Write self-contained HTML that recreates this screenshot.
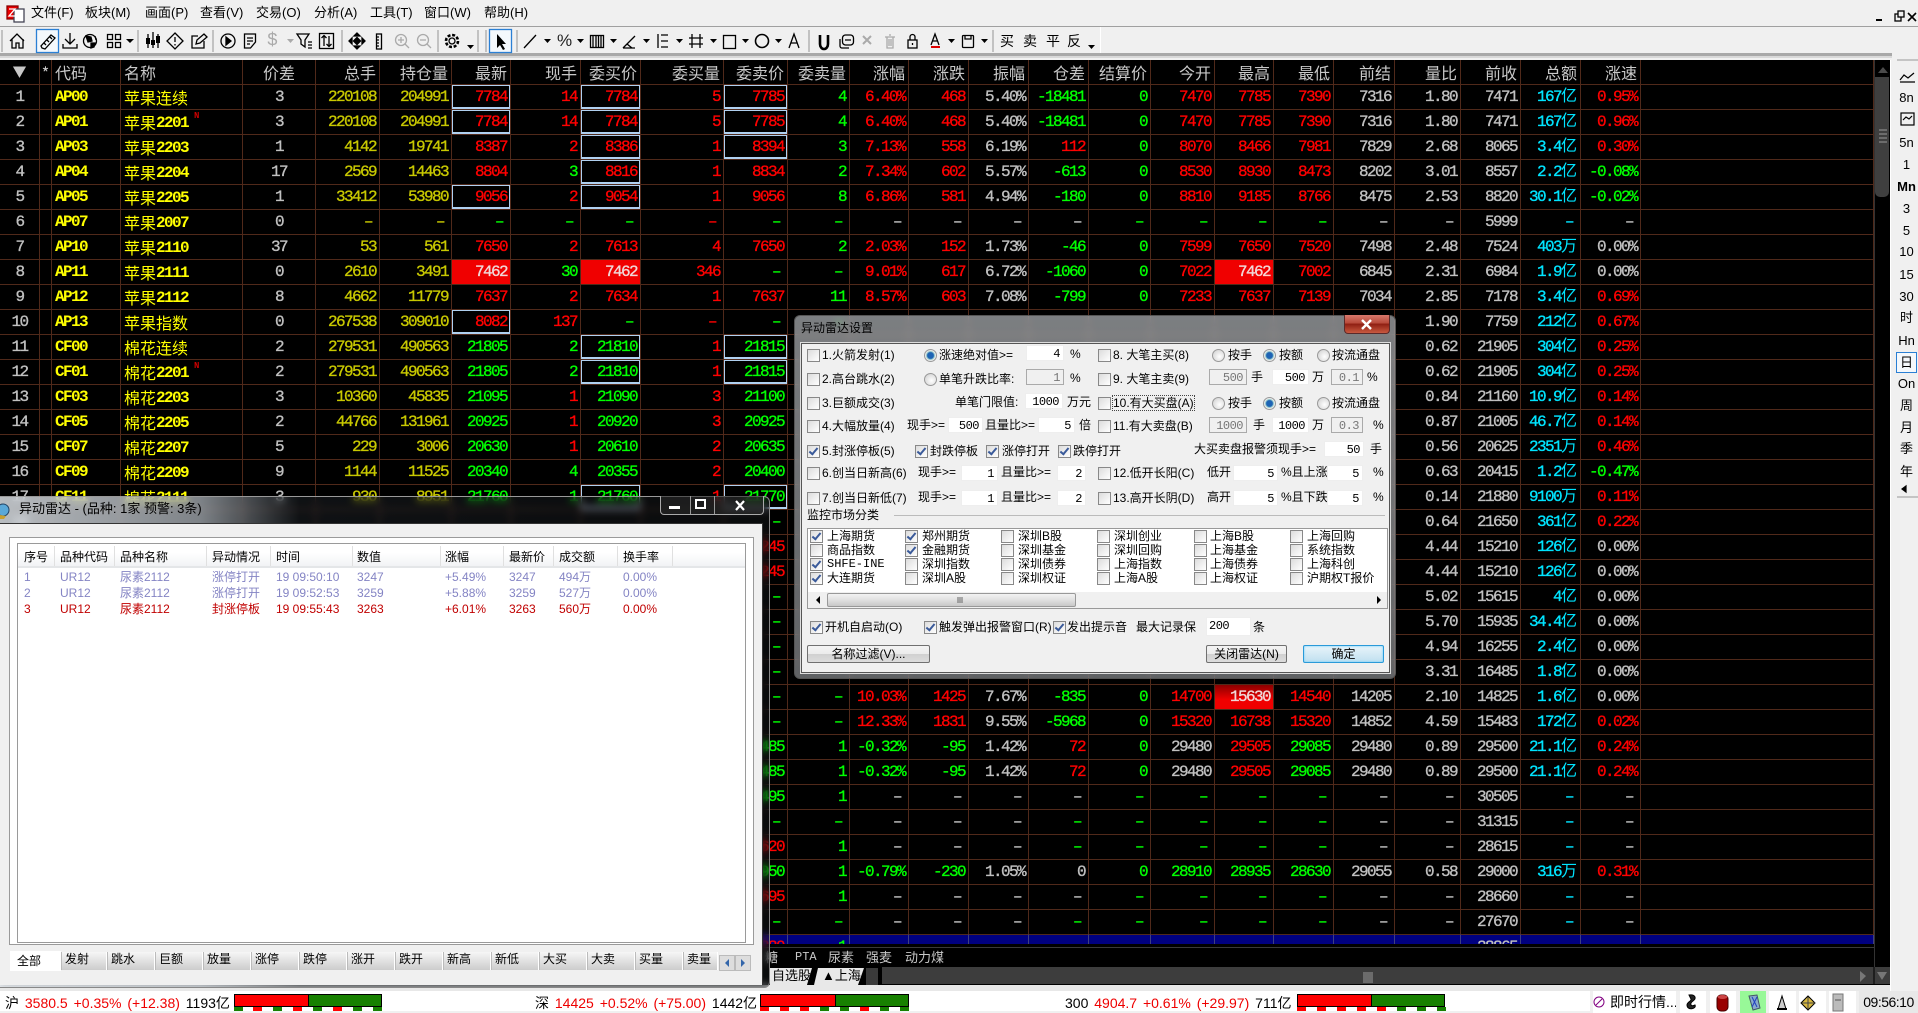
<!DOCTYPE html>
<html><head><meta charset="utf-8"><style>
html,body{margin:0;padding:0;background:#f0f0f0;width:1918px;height:1013px;overflow:hidden;font-family:"Liberation Sans","WenQuanYi Zen Hei","Noto Sans CJK SC",sans-serif}
.t{position:absolute;white-space:nowrap;font-size:12px;line-height:14px;color:#000}
.m{position:absolute;font-size:13px;line-height:16px;top:5px;color:#000;white-space:nowrap}
#tb{position:absolute;left:0;top:60px;width:1874px;height:884px;overflow:hidden;background:#000}
table{border-collapse:separate;border-spacing:0;table-layout:fixed;width:1874px;position:absolute;left:0;top:0}
tr{height:25px}
tr:first-child{height:24px}
td,th{box-sizing:border-box;border-right:1px solid #50291a;border-top:1px solid #50291a;overflow:hidden;white-space:nowrap;padding:0 3px 0 0;text-align:right;font:16px/24px "Liberation Mono",monospace;letter-spacing:-1.6px;height:25px;max-height:25px;color:#c0c0c0;-webkit-text-stroke:.35px currentColor}
th{height:24px;border-top:0;font:16px/22px "WenQuanYi Zen Hei","Noto Sans CJK SC",sans-serif;letter-spacing:0;color:#c8c8c8;-webkit-text-stroke:0}
td:nth-child(1),th:nth-child(1){text-align:center;padding:0}
td:nth-child(2),th:nth-child(2){padding:0;text-align:center}
td:nth-child(3),th:nth-child(3){text-align:left;padding-left:3px;color:#ff0;font-weight:bold;-webkit-text-stroke:0}
td:nth-child(4),th:nth-child(4){text-align:left;padding-left:3px;color:#ff0;font-family:"WenQuanYi Zen Hei","Noto Sans CJK SC",sans-serif;letter-spacing:0;-webkit-text-stroke:0}
th:nth-child(3),th:nth-child(4){color:#c8c8c8;font-weight:normal}
td:nth-child(4) i{font:bold 16px/1 "Liberation Mono",monospace;letter-spacing:-1.6px;position:relative;top:-2px}
td:nth-child(4) sup{font:bold 9px/1 "Liberation Mono",monospace;color:#c00;position:relative;top:2px;left:6px;vertical-align:top}
td:nth-child(5),th:nth-child(5){text-align:center;padding:0}
td:nth-child(6),td:nth-child(7){color:#c8c800}
td:nth-child(8),td:nth-child(9),td:nth-child(10),td:nth-child(11),td:nth-child(12),td:nth-child(14),td:nth-child(15),td:nth-child(19),td:nth-child(20),td:nth-child(21),td:nth-child(26){color:#f00}
td:nth-child(13),td:nth-child(17),td:nth-child(18){color:#0f0}
td:nth-child(25){color:#00e4ff}
td.g{color:#0f0!important}td.r{color:#f00!important}td.w{color:#c0c0c0!important}
td.b{box-shadow:inset 0 0 0 1px #b0d0f0,inset 0 -1px 0 1px #b0d0f0}
td.rb{background:#f00000;color:#f0d8d8!important}
td u{text-decoration:none;margin-right:4px}
td em{font:16px/1 "WenQuanYi Zen Hei","Noto Sans CJK SC",sans-serif;letter-spacing:0;-webkit-text-stroke:0}
tr.bl td{background:#000080;border-right-color:#404080}
.c,.o{position:absolute;width:11px;height:11px;border:1px solid #888;background:linear-gradient(135deg,#dcdcdc,#fff);display:block}
.o{border-radius:50%;border-color:#999;background:radial-gradient(circle at 60% 60%,#fff,#ccc)}
.o.k{background:radial-gradient(circle,#1e64b4 0 3px,#9cc 4px,#eee 5px)}
.c.k::after{content:"";position:absolute;left:3px;top:0;width:3px;height:7px;border:solid #3a5a9a;border-width:0 2px 2px 0;transform:rotate(40deg)}
.f{position:absolute;height:16px;line-height:16px;font:12px/16px "Liberation Mono",monospace;text-align:right;background:#fff;box-sizing:border-box;padding-right:3px;color:#000;border:1px solid #eee;letter-spacing:-.5px}
.f.d{background:#f0f0f0;border-color:#aaa;color:#777}
.btn{position:absolute;top:645px;height:18px;line-height:17px;box-sizing:border-box;border:1px solid #707070;border-radius:2px;background:linear-gradient(#f4f4f4 0,#ebebeb 50%,#d0d0d0 51%,#dcdcdc);font-size:12px;text-align:center;color:#000;white-space:nowrap}
.gl{position:absolute;backdrop-filter:blur(4px);-webkit-backdrop-filter:blur(4px)}
.tab{position:absolute;top:952px;height:18px;box-sizing:border-box;border-right:1px solid #fff;border-left:1px solid #bbb;background:linear-gradient(#f6f6f6,#ccc);font-size:12px;line-height:15px;padding-left:3px;color:#000;white-space:nowrap}
.s{position:absolute;left:1896px;width:21px;text-align:center;font:13px/16px "Liberation Sans","WenQuanYi Zen Hei",sans-serif;color:#000;letter-spacing:0}
.st{position:absolute;top:995px;font-size:14px;line-height:16px;white-space:nowrap;word-spacing:2px;color:#000}
.st span{color:#e00}
.q{position:absolute;top:1007px;width:9px;height:4px}
.bar{position:absolute;top:994px;height:11px;border:1px solid #000;box-sizing:content-box;background:#178000}
.bar i{display:block;height:100%;background:#f00;border-right:1px solid #000}
.cell{position:absolute;top:991px;height:22px;background:#fff;box-sizing:border-box}
</style></head><body>
<svg style="position:absolute;left:0;top:0" width="1918" height="58" fill="none" stroke="#000" stroke-width="1.3">
<rect x="0" y="26" width="1918" height="1" fill="#a0a0a0" stroke="none"/>
<rect x="0" y="53" width="1892" height="3" fill="#a8a8a8" stroke="none"/>
<rect x="0" y="56" width="1892" height="4" fill="#d8d8d8" stroke="none"/>
<rect x="1100" y="27" width="1" height="26" fill="#fff" stroke="none"/>
<rect x="7" y="6" width="11" height="13" fill="#e00" stroke="#800"/><rect x="14" y="9" width="10" height="13" fill="#fff" stroke="#445"/><path d="M9 9h6l-6 7h6" stroke="#fff"/>
<path d="M1876 20h6" stroke-width="2"/><rect x="1895" y="14" width="6" height="7" fill="#f0f0f0"/><rect x="1898" y="11" width="6" height="6" fill="#f0f0f0"/><path d="M1908 13l8 8m0-8l-8 8" stroke-width="1.6"/>
<g stroke="#aaa"><path d="M2 30v22M138 30v22M213 30v22M342 30v22M438 30v22M478 30v22M486 30v22M517 30v22M809 30v22M993 30v22"/></g>
<path d="M10 41l7-7 7 7M12 39v9h4v-5h3v5h4v-9"/>
<rect x="36.500" y="29.500" width="22" height="23" stroke="#2a7fd4" fill="#f4f8fc"/><path d="M42 48l-1-2 10-11 4 3-10 11zM44 43l2 2M47 40l2 2M50 37l2 2"/>
<path d="M70 33v10M65 39l5 5 5-5M63 44v4h14v-4"/>
<circle cx="90" cy="41" r="6.500"/><path d="M86 36l5 1 1 4-4 1zM91 43l4 0-1 4-3 1zM95 36l1 4" fill="#000"/>
<path d="M107.500 34.500h5v5h-5zM115.500 34.500h5v5h-5zM107.500 42.500h5v5h-5zM115.500 42.500h5v5h-5z"/>
<path d="M148 34v14M153 32v16M158 34v14"/><path d="M146 38h4v6h-4zM151 40h4v5h-4zM156 36h4v7h-4z" fill="#000" stroke="none"/>
<path d="M175 33l8 8-8 8-8-8zM175 37v5M175 44v1.500"/>
<path d="M198 36h-6v12h12v-7M196 44l1-4 7-6 3 3-7 6z"/>
<circle cx="228" cy="41" r="7"/><path d="M226 37l5 4-5 4z" fill="#000"/>
<path d="M244.500 34h11v8l-5 6h-6zM247 38h6M247 41h6M247 44h3"/>
<path d="M297 34h12l-4 6v7l-4-3v-4zM308 42h4M308 45h4M308 48h4"/>
<rect x="319.500" y="33.500" width="14" height="15"/><path d="M324 36v10M321.500 38l2.500-2.500 2.500 2.500M329 36v10M326.500 44l2.500 2.500 2.500-2.500"/>
<path d="M357 33l-3 3h6zM357 49l-3-3h6zM349 41l3-3v6zM365 41l-3-3v6z" fill="#000"/><rect x="354.500" y="38.500" width="5" height="5" transform="rotate(45 357 41)" fill="#000"/>
<rect x="376.500" y="34" width="5" height="15"/><path d="M377 37h2M377 40h2M377 43h2M377 46h2"/>
<g stroke="#aaa"><circle cx="401" cy="40" r="5.500"/><path d="M405 44l4 4M398 40h6M401 37v6"/><circle cx="423" cy="40" r="5.500"/><path d="M427 44l4 4M420 40h6"/>
<path d="M867 37l8 8m0-8l-8 8" transform="translate(-4 -1)" stroke-width="2"/><path d="M885 37h10M887 37v11h6v-11M889 35h2M889 39v7M891 39v7"/></g>
<circle cx="452" cy="41" r="3"/><circle cx="452" cy="41" r="6" stroke-width="2.600" stroke-dasharray="3 1.700"/>
<rect x="489.500" y="29.500" width="22" height="23" stroke="#2a7fd4" fill="#f4f8fc"/><path d="M497 34v14l3-3 3 5 2-1-3-5h4z" fill="#000" stroke="none"/>
<path d="M524 48l12-13"/>
<rect x="590.500" y="35.500" width="13" height="12"/><path d="M593 36v11M596 36v11M598.500 36v11M601 36v11"/>
<path d="M623 48l12-12M623 48h12M627 44l5 4" /><path d="M658 34v14M661 35h7M661 41h7M661 47h7"/>
<path d="M692 34v14M700 34v14M689 38h14M689 44h14"/><rect x="723.500" y="35.500" width="12" height="13"/><circle cx="762" cy="41" r="6.500" stroke-width="1.600"/>
<path d="M789 48l5-14 5 14M791 43h6"/>
<path d="M820 35v9a4 5 0 0 0 8 0v-9" stroke-width="2.600"/>
<rect x="842.500" y="35" width="11" height="10" rx="3"/><path d="M840 39v7a2 2 0 0 0 2 2h7M845 40h6"/>
<rect x="908" y="40" width="9" height="8"/><path d="M910 40v-3a2.500 2.500 0 0 1 5 0v3"/><path d="M912.500 43v2"/>
<path d="M931 45l4-11 4 11M932.500 41h5"/><rect x="931" y="46" width="9" height="2" fill="#d00" stroke="none"/>
<rect x="962.500" y="35.500" width="11" height="12" rx="1"/><path d="M965 36v3h6v-3"/>
<g fill="#000" stroke="none"><path d="M126 39h8l-4 4zM544 39h7l-3.500 4zM577 39h7l-3.500 4zM610 39h7l-3.500 4zM643 39h7l-3.500 4zM676 39h7l-3.500 4zM710 39h7l-3.500 4zM742 39h7l-3.500 4zM775 39h7l-3.500 4zM948 39h7l-3.500 4zM981 39h7l-3.500 4zM467 45h7l-3.500 4zM1088 45h7l-3.500 4z"/><path d="M287 39h7l-3.500 4z" fill="#aaa"/></g>
</svg>
<span class="t" style="left:267px;top:32px;font:18px/18px 'Liberation Mono',monospace;color:#aaa">$</span>
<span class="t" style="left:557px;top:32px;font:17px/18px 'Liberation Sans';color:#222">%</span>
<span class="t" style="left:1000px;top:34px;font-size:14px">买</span><span class="t" style="left:1023px;top:34px;font-size:14px">卖</span><span class="t" style="left:1046px;top:34px;font-size:14px">平</span><span class="t" style="left:1067px;top:34px;font-size:14px">反</span>
<span class="m" style="left:31px">文件(F)</span><span class="m" style="left:85px">板块(M)</span><span class="m" style="left:145px">画面(P)</span><span class="m" style="left:200px">查看(V)</span><span class="m" style="left:256px">交易(O)</span><span class="m" style="left:314px">分析(A)</span><span class="m" style="left:370px">工具(T)</span><span class="m" style="left:424px">窗口(W)</span><span class="m" style="left:484px">帮助(H)</span>

<div style="position:absolute;left:0;top:60px;width:1892px;height:925px;background:#000"></div>
<div id="tb"><table><colgroup><col width="40"><col width="12"><col width="69"><col width="122"><col width="73"><col width="64"><col width="72"><col width="59"><col width="70"><col width="60"><col width="83"><col width="64"><col width="62"><col width="59"><col width="60"><col width="60"><col width="60"><col width="62"><col width="64"><col width="59"><col width="60"><col width="61"><col width="66"><col width="60"><col width="60"><col width="60"><col></colgroup>
<tr><th style="font-size:14px">▼</th><th>*</th><th>代码</th><th>名称</th><th>价差</th><th>总手</th><th>持仓量</th><th>最新</th><th>现手</th><th>委买价</th><th>委买量</th><th>委卖价</th><th>委卖量</th><th>涨幅</th><th>涨跌</th><th>振幅</th><th>仓差</th><th>结算价</th><th>今开</th><th>最高</th><th>最低</th><th>前结</th><th>量比</th><th>前收</th><th>总额</th><th>涨速</th><th></th></tr>
<tr><td>1<td><td>AP00<td>苹果连续<td>3<td>220108<td>204991<td class=b>7784<td>14<td class=b>7784<td>5<td class=b>7785<td>4<td>6.40%<td>468<td class=w>5.40%<td>-18481<td>0<td>7470<td>7785<td>7390<td>7316<td>1.80<td>7471<td>167<em>亿</em><td>0.95%<td></tr>
<tr><td>2<td><td>AP01<td>苹果<i>2201</i><sup>N</sup><td>3<td>220108<td>204991<td class=b>7784<td>14<td class=b>7784<td>5<td class=b>7785<td>4<td>6.40%<td>468<td class=w>5.40%<td>-18481<td>0<td>7470<td>7785<td>7390<td>7316<td>1.80<td>7471<td>167<em>亿</em><td>0.96%<td></tr>
<tr><td>3<td><td>AP03<td>苹果<i>2203</i><td>1<td>4142<td>19741<td>8387<td>2<td class=b>8386<td>1<td class=b>8394<td>3<td>7.13%<td>558<td class=w>6.19%<td class=r>112<td>0<td>8070<td>8466<td>7981<td>7829<td>2.68<td>8065<td>3.4<em>亿</em><td>0.30%<td></tr>
<tr><td>4<td><td>AP04<td>苹果<i>2204</i><td>17<td>2569<td>14463<td>8804<td class=g>3<td class=b>8816<td>1<td>8834<td>2<td>7.34%<td>602<td class=w>5.57%<td>-613<td>0<td>8530<td>8930<td>8473<td>8202<td>3.01<td>8557<td>2.2<em>亿</em><td class=g>-0.08%<td></tr>
<tr><td>5<td><td>AP05<td>苹果<i>2205</i><td>1<td>33412<td>53980<td class=b>9056<td>2<td class=b>9054<td>1<td>9056<td>8<td>6.86%<td>581<td class=w>4.94%<td>-180<td>0<td>8810<td>9185<td>8766<td>8475<td>2.53<td>8820<td>30.1<em>亿</em><td class=g>-0.02%<td></tr>
<tr><td>6<td><td>AP07<td>苹果<i>2007</i><td>0<td><u>–</u><td><u>–</u><td class=g><u>–</u><td class=g><u>–</u><td class=g><u>–</u><td><u>–</u><td class=g><u>–</u><td><u>–</u><td class=w><u>–</u><td class=w><u>–</u><td class=w><u>–</u><td class=w><u>–</u><td><u>–</u><td class=g><u>–</u><td class=g><u>–</u><td class=g><u>–</u><td><u>–</u><td><u>–</u><td>5999<td><u>–</u><td class=w><u>–</u><td></tr>
<tr><td>7<td><td>AP10<td>苹果<i>2110</i><td>37<td>53<td>561<td>7650<td>2<td>7613<td>4<td>7650<td>2<td>2.03%<td>152<td class=w>1.73%<td>-46<td>0<td>7599<td>7650<td>7520<td>7498<td>2.48<td>7524<td>403<em>万</em><td class=w>0.00%<td></tr>
<tr><td>8<td><td>AP11<td>苹果<i>2111</i><td>0<td>2610<td>3491<td class=rb>7462<td class=g>30<td class=rb>7462<td>346<td class=g><u>–</u><td><u>–</u><td>9.01%<td>617<td class=w>6.72%<td>-1060<td>0<td>7022<td class=rb>7462<td>7002<td>6845<td>2.31<td>6984<td>1.9<em>亿</em><td class=w>0.00%<td></tr>
<tr><td>9<td><td>AP12<td>苹果<i>2112</i><td>8<td>4662<td>11779<td>7637<td>2<td>7634<td>1<td>7637<td>11<td>8.57%<td>603<td class=w>7.08%<td>-799<td>0<td>7233<td>7637<td>7139<td>7034<td>2.85<td>7178<td>3.4<em>亿</em><td>0.69%<td></tr>
<tr><td>10<td><td>AP13<td>苹果指数<td>0<td>267538<td>309010<td class=b>8082<td>137<td class=g><u>–</u><td><u>–</u><td class=g><u>–</u><td><u>–</u><td><td><td><td><td><td><td><td><td><td>1.90<td>7759<td>212<em>亿</em><td>0.67%<td></tr>
<tr><td>11<td><td>CF00<td>棉花连续<td>2<td>279531<td>490563<td class=g>21805<td class=g>2<td class="b g">21810<td>1<td class="b g">21815<td><td><td><td><td><td><td><td><td><td><td>0.62<td>21905<td>304<em>亿</em><td>0.25%<td></tr>
<tr><td>12<td><td>CF01<td>棉花<i>2201</i><sup>N</sup><td>2<td>279531<td>490563<td class=g>21805<td class=g>2<td class="b g">21810<td>1<td class="b g">21815<td><td><td><td><td><td><td><td><td><td><td>0.62<td>21905<td>304<em>亿</em><td>0.25%<td></tr>
<tr><td>13<td><td>CF03<td>棉花<i>2203</i><td>3<td>10360<td>45835<td class=g>21095<td>1<td class=g>21090<td>3<td class=g>21100<td><td><td><td><td><td><td><td><td><td><td>0.84<td>21160<td>10.9<em>亿</em><td>0.14%<td></tr>
<tr><td>14<td><td>CF05<td>棉花<i>2205</i><td>2<td>44766<td>131961<td class=g>20925<td>1<td class=g>20920<td>3<td class=g>20925<td><td><td><td><td><td><td><td><td><td><td>0.87<td>21005<td>46.7<em>亿</em><td>0.14%<td></tr>
<tr><td>15<td><td>CF07<td>棉花<i>2207</i><td>5<td>229<td>3006<td class=g>20630<td>1<td class=g>20610<td>2<td class=g>20635<td><td><td><td><td><td><td><td><td><td><td>0.56<td>20625<td>2351<em>万</em><td>0.46%<td></tr>
<tr><td>16<td><td>CF09<td>棉花<i>2209</i><td>9<td>1144<td>11525<td class=g>20340<td class=g>4<td class=g>20355<td>2<td class=g>20400<td><td><td><td><td><td><td><td><td><td><td>0.63<td>20415<td>1.2<em>亿</em><td class=g>-0.47%<td></tr>
<tr><td>17<td><td>CF11<td>棉花<i>2111</i><td>3<td>930<td>8951<td class=g>21760<td class=g>1<td class="b g">21760<td>1<td class="b g">21770<td><td><td><td><td><td><td><td><td><td><td>0.14<td>21880<td>9100<em>万</em><td>0.11%<td></tr>
<tr><td>18<td><td><td><td><td><td><td><td><td><td><td class=g><u>–</u><td><td><td><td><td><td><td><td><td><td><td>0.64<td>21650<td>361<em>亿</em><td>0.22%<td></tr>
<tr><td>19<td><td><td><td><td><td><td><td><td><td><td>15245<td><td><td><td><td><td><td><td><td><td><td>4.44<td>15210<td>126<em>亿</em><td class=w>0.00%<td></tr>
<tr><td>20<td><td><td><td><td><td><td><td><td><td><td>15245<td><td><td><td><td><td><td><td><td><td><td>4.44<td>15210<td>126<em>亿</em><td class=w>0.00%<td></tr>
<tr><td>21<td><td><td><td><td><td><td><td><td><td><td class=g><u>–</u><td><td><td><td><td><td><td><td><td><td><td>5.02<td>15615<td>4<em>亿</em><td class=w>0.00%<td></tr>
<tr><td>22<td><td><td><td><td><td><td><td><td><td><td class=g><u>–</u><td><td><td><td><td><td><td><td><td><td><td>5.70<td>15935<td>34.4<em>亿</em><td class=w>0.00%<td></tr>
<tr><td>23<td><td><td><td><td><td><td><td><td><td><td class=g><u>–</u><td><td><td><td><td><td><td><td><td><td><td>4.94<td>16255<td>2.4<em>亿</em><td class=w>0.00%<td></tr>
<tr><td>24<td><td><td><td><td><td><td><td><td><td><td class=g><u>–</u><td><td><td><td><td><td><td><td><td><td><td>3.31<td>16485<td>1.8<em>亿</em><td class=w>0.00%<td></tr>
<tr><td>25<td><td><td><td><td><td><td><td><td><td><td class=g><u>–</u><td><u>–</u><td>10.03%<td>1425<td class=w>7.67%<td>-835<td>0<td>14700<td class=rb style="background:linear-gradient(#8a0000,#f00000 60%)">15630<td>14540<td>14205<td>2.10<td>14825<td>1.6<em>亿</em><td class=w>0.00%<td></tr>
<tr><td>26<td><td><td><td><td><td><td><td><td><td><td class=g><u>–</u><td><u>–</u><td>12.33%<td>1831<td class=w>9.55%<td>-5968<td>0<td>15320<td>16738<td>15320<td>14852<td>4.59<td>15483<td>172<em>亿</em><td>0.02%<td></tr>
<tr><td>27<td><td><td><td><td><td><td><td><td><td><td class=g>29485<td>1<td class=g>-0.32%<td class=g>-95<td class=w>1.42%<td class=r>72<td>0<td class=w>29480<td>29505<td class=g>29085<td>29480<td>0.89<td>29500<td>21.1<em>亿</em><td>0.24%<td></tr>
<tr><td>28<td><td><td><td><td><td><td><td><td><td><td class=g>29485<td>1<td class=g>-0.32%<td class=g>-95<td class=w>1.42%<td class=r>72<td>0<td class=w>29480<td>29505<td class=g>29085<td>29480<td>0.89<td>29500<td>21.1<em>亿</em><td>0.24%<td></tr>
<tr><td>29<td><td><td><td><td><td><td><td><td><td><td class=g>30495<td>1<td class=w><u>–</u><td class=w><u>–</u><td class=w><u>–</u><td class=w><u>–</u><td><u>–</u><td class=g><u>–</u><td class=g><u>–</u><td class=g><u>–</u><td><u>–</u><td><u>–</u><td>30505<td><u>–</u><td class=w><u>–</u><td></tr>
<tr><td>30<td><td><td><td><td><td><td><td><td><td><td class=g><u>–</u><td><u>–</u><td class=w><u>–</u><td class=w><u>–</u><td class=w><u>–</u><td><u>–</u><td><u>–</u><td class=g><u>–</u><td class=g><u>–</u><td class=g><u>–</u><td><u>–</u><td><u>–</u><td>31315<td><u>–</u><td class=w><u>–</u><td></tr>
<tr><td>31<td><td><td><td><td><td><td><td><td><td><td>28620<td>1<td class=w><u>–</u><td class=w><u>–</u><td class=w><u>–</u><td><u>–</u><td><u>–</u><td class=g><u>–</u><td class=g><u>–</u><td class=g><u>–</u><td><u>–</u><td><u>–</u><td>28615<td><u>–</u><td class=w><u>–</u><td></tr>
<tr><td>32<td><td><td><td><td><td><td><td><td><td><td class=g>28950<td>1<td class=g>-0.79%<td class=g>-230<td class=w>1.05%<td class=w>0<td>0<td class=g>28910<td class=g>28935<td class=g>28630<td>29055<td>0.58<td>29000<td>316<em>万</em><td>0.31%<td></tr>
<tr><td>33<td><td><td><td><td><td><td><td><td><td><td>28695<td>1<td class=w><u>–</u><td class=w><u>–</u><td class=w><u>–</u><td class=w><u>–</u><td><u>–</u><td class=g><u>–</u><td class=g><u>–</u><td class=g><u>–</u><td><u>–</u><td><u>–</u><td>28660<td><u>–</u><td class=w><u>–</u><td></tr>
<tr><td>34<td><td><td><td><td><td><td><td><td><td><td class=g><u>–</u><td><u>–</u><td class=w><u>–</u><td class=w><u>–</u><td class=w><u>–</u><td><u>–</u><td><u>–</u><td class=g><u>–</u><td class=g><u>–</u><td class=g><u>–</u><td><u>–</u><td><u>–</u><td>27670<td><u>–</u><td class=w><u>–</u><td></tr>
<tr class=bl><td>35<td><td><td><td><td><td><td><td><td><td><td>28880<td>1<td><td><td><td><td><td><td><td><td><td><td>28865<td><td><td></tr>
</table>
<div style="position:absolute;left:1642px;top:24px;width:232px;height:851px;background:repeating-linear-gradient(#50291a 0,#50291a 1px,transparent 1px,transparent 25px)"></div>
</div>
<div style="position:absolute;left:0;top:947px;width:1874px;height:1px;background:#3a3a3a"></div>
<!-- vertical scrollbar -->
<div style="position:absolute;left:1874px;top:60px;width:1px;height:907px;background:#333"></div>
<div style="position:absolute;left:1875px;top:77px;width:14px;height:120px;background:#3f3f3f;border-radius:0 0 5px 5px"></div>
<svg style="position:absolute;left:1875px;top:60px" width="16" height="125"><path d="M3 13l5-6 5 6z" fill="#4a4a4a"/><path d="M4 70h8M4 74h8M4 78h8M4 82h8" stroke="#999"/></svg>
<!-- bottom tabs -->
<div style="position:absolute;left:760px;top:950px;font-size:13px;line-height:15px;color:#c8c8c8;white-space:nowrap"><span style="position:absolute;left:5px">糖</span><span style="position:absolute;left:35px;font:12px/15px 'Liberation Mono',monospace">PTA</span><span style="position:absolute;left:68px">尿素</span><span style="position:absolute;left:106px">强麦</span><span style="position:absolute;left:145px">动力煤</span></div>
<div style="position:absolute;left:770px;top:968px;width:42px;height:17px;background:#e8e8e8;font-size:13px;line-height:16px;color:#000;padding-left:2px;box-sizing:border-box;white-space:nowrap;clip-path:polygon(0 0,100% 0,88% 100%,0 100%)">自选股</div>
<div style="position:absolute;left:814px;top:968px;width:50px;height:17px;background:#e8e8e8;font-size:13px;line-height:16px;color:#000;padding-left:8px;box-sizing:border-box;white-space:nowrap;clip-path:polygon(8% 0,100% 0,88% 100%,0 100%)">▲上海</div>
<div style="position:absolute;left:866px;top:968px;width:12px;height:17px;background:#3a3a3a"></div>
<div style="position:absolute;left:882px;top:967px;width:1008px;height:17px;background:#3d3d3d"></div>
<svg style="position:absolute;left:1355px;top:967px" width="540" height="18"><path d="M9 5v11M11 5v11M13 5v11M15 5v11M17 5v11" stroke="#999"/><path d="M505 4l6 5-6 6z" fill="#777"/><path d="M522 5h10l-5 8z" fill="#777"/><path d="M519 0v18" stroke="#000"/></svg>
<div style="position:absolute;left:0;top:985px;width:1892px;height:6px;background:#e8e8e8"></div>

<!-- sidebar -->
<div style="position:absolute;left:1890px;top:60px;width:28px;height:953px;background:#f0f0f0;border-left:1px solid #fff"></div>
<svg style="position:absolute;left:1890px;top:55px" width="28" height="450" fill="none" stroke="#000" stroke-width="1.200"><path d="M7 5h22" stroke="#aaa"/><path d="M10 25l4-5 4 3 6-5M10 27h15"/><rect x="11" y="58" width="13" height="12"/><path d="M13 65l3-3 3 2 3-3"/><path d="M7 442h22" stroke="#aaa"/><path d="M16 431l-4 3 4 3z" fill="#000"/></svg>
<span class="s" style="top:90px">8n</span><span class="s" style="top:135px">5n</span><span class="s" style="top:157px">1</span><span class="s" style="top:179px;font-weight:bold">Mn</span><span class="s" style="top:201px">3</span><span class="s" style="top:223px">5</span><span class="s" style="top:244px">10</span><span class="s" style="top:267px">15</span><span class="s" style="top:289px">30</span><span class="s" style="top:310px">时</span><span class="s" style="top:333px">Hn</span>
<span class="s" style="top:352px;height:21px;line-height:20px;box-sizing:border-box;border:1px solid #2a7fd4;background:#f4f8fc;left:1896px">日</span>
<span class="s" style="top:376px">On</span><span class="s" style="top:398px">周</span><span class="s" style="top:420px">月</span><span class="s" style="top:441px">季</span><span class="s" style="top:464px">年</span>

<!-- status bar -->
<div style="position:absolute;left:0;top:991px;width:1918px;height:22px;background:#fff"></div>
<div style="position:absolute;left:0;top:1011px;width:1918px;height:2px;background:#f0f0f0"></div>
<div class="st" style="left:5px">沪 <span>3580.5 +0.35% (+12.38)</span> 1193亿</div>
<div class="bar" style="left:234px;width:146px"><i style="width:73px"></i></div>
<i class="q" style="left:234px;background:#178000"></i><i class="q" style="left:253px;background:#f00"></i><i class="q" style="left:273px;background:#178000"></i><i class="q" style="left:293px;background:#f00"></i><i class="q" style="left:313px;background:#178000"></i><i class="q" style="left:333px;background:#f00"></i><i class="q" style="left:353px;background:#178000"></i><i class="q" style="left:373px;background:#178000"></i>
<div class="st" style="left:535px">深 <span>14425 +0.52% (+75.00)</span> 1442亿</div>
<div class="bar" style="left:760px;width:147px"><i style="width:74px"></i></div>
<i class="q" style="left:760px;background:#f00"></i><i class="q" style="left:780px;background:#f00"></i><i class="q" style="left:800px;background:#f00"></i><i class="q" style="left:820px;background:#178000"></i><i class="q" style="left:840px;background:#178000"></i><i class="q" style="left:860px;background:#f00"></i><i class="q" style="left:880px;background:#178000"></i><i class="q" style="left:900px;background:#178000"></i>
<div class="st" style="left:1065px">300 <span>4904.7 +0.61% (+29.97)</span> 711亿</div>
<div class="bar" style="left:1297px;width:146px"><i style="width:73px"></i></div>
<i class="q" style="left:1297px;background:#f00"></i><i class="q" style="left:1317px;background:#f00"></i><i class="q" style="left:1337px;background:#f00"></i><i class="q" style="left:1357px;background:#f00"></i><i class="q" style="left:1377px;background:#f00"></i><i class="q" style="left:1397px;background:#178000"></i><i class="q" style="left:1417px;background:#178000"></i><i class="q" style="left:1437px;background:#178000"></i>
<div style="position:absolute;left:1590px;top:991px;width:328px;height:22px;background:#f0f0f0"></div>
<div class="cell" style="left:1593px;width:83px;font-size:14px;line-height:22px;padding-left:17px;white-space:nowrap;overflow:hidden">即时行情...</div>
<div class="cell" style="left:1680px;width:26px"></div><div class="cell" style="left:1710px;width:26px"></div><div class="cell" style="left:1740px;width:26px;background:#98f898"></div><div class="cell" style="left:1769px;width:27px"></div><div class="cell" style="left:1799px;width:27px"></div><div class="cell" style="left:1829px;width:27px"></div>
<svg style="position:absolute;left:1590px;top:991px" width="270" height="22" fill="none" stroke="#000">
<circle cx="9" cy="11" r="5" stroke="#800080"/><path d="M6 14l6-6" stroke="#800080"/>
<path d="M99 4c6-1 8 3 4 6s-2 6 2 4c2 4-8 6-8 0 0-3 5-4 4-6z" fill="#222"/>
<rect x="127" y="4" width="11" height="16" rx="4" fill="#900" stroke="#400"/><ellipse cx="132.500" cy="6" rx="5" ry="2" fill="#c44" stroke="none"/>
<path d="M159 5l8-1 3 13-7 2z" fill="#8ac" stroke="#456"/><path d="M162 6l5 10m0-10l-5 10" stroke="#2040c0"/>
<path d="M192 5l-4 13h8z" fill="#ccc"/><path d="M187 18h10" stroke-width="2"/>
<path d="M218 5l7 7-7 7-7-7z" fill="#d8b840"/><path d="M212 12h13M218 6v12" stroke="#444"/>
<rect x="243" y="3" width="10" height="17" fill="#bbb" stroke="#777"/><path d="M245 9h6" stroke="#555"/>
</svg>
<div style="position:absolute;left:1859px;top:991px;width:59px;height:22px;background:#e8e8e8;font-size:14px;line-height:22px;letter-spacing:-.5px;text-align:center">09:56:10</div>

<!-- left window -->
<div class="gl" style="left:0;top:496px;width:770px;height:492px;background:linear-gradient(90deg,rgba(230,235,240,.8) 0,rgba(210,218,226,.6) 200px,rgba(60,70,80,.25) 300px,rgba(40,45,50,.25) 100%);border-right:1px solid #888;border-bottom:1px solid #888;border-top:1px solid #999;box-sizing:border-box;border-radius:0 6px 6px 0"></div>
<div style="position:absolute;left:0;top:523px;width:763px;height:462px;background:#f0f0f0;border-right:1px solid #333;border-top:1px solid #333;box-sizing:border-box"></div>
<svg style="position:absolute;left:0;top:502px" width="14" height="18"><circle cx="3" cy="8" r="6" fill="#5aa8d8" stroke="#246"/><path d="M0 13l6 1-2 3h-4z" fill="#c9a030"/></svg>
<span class="t" style="left:19px;top:502px;font-size:13px;color:#000">异动雷达 - (品种: 1家  预警: 3条)</span>
<div style="position:absolute;left:660px;top:496px;width:104px;height:19px;border:1px solid #aaa;border-top:none;border-radius:0 0 4px 4px;box-sizing:border-box;background:rgba(40,40,40,.6)"><span style="position:absolute;left:29px;top:0;bottom:0;width:1px;background:#999"></span><span style="position:absolute;left:53px;top:0;bottom:0;width:1px;background:#999"></span></div>
<svg style="position:absolute;left:660px;top:496px" width="104" height="19"><rect x="9" y="10" width="11" height="3" fill="#fff"/><rect x="36" y="4" width="9" height="8" fill="none" stroke="#fff" stroke-width="2"/><path d="M76 5l8 9m0-9l-8 9" stroke="#fff" stroke-width="2.200"/></svg>
<div style="position:absolute;left:9px;top:537px;width:745px;height:408px;border:1px solid #9a9a9a;background:#fff;box-sizing:border-box"></div>
<div style="position:absolute;left:17px;top:543px;width:729px;height:400px;border:1px solid #9a9a9a;border-bottom:1px solid #9a9a9a;background:#fff;box-sizing:border-box"></div>
<div style="position:absolute;left:18px;top:544px;width:727px;height:24px;background:linear-gradient(#fff 40%,#f2f3f5);border-bottom:2px solid #e4e6e8;box-sizing:border-box"></div>
<div style="position:absolute;left:54px;top:546px;width:1px;height:20px;background:#e0e0e0;box-shadow:60px 0 #e0e0e0,152px 0 #e0e0e0,216px 0 #e0e0e0,298px 0 #e0e0e0,386px 0 #e0e0e0,449px 0 #e0e0e0,499px 0 #e0e0e0,563px 0 #e0e0e0,618px 0 #e0e0e0"></div>
<span class="t" style="left:24px;top:550px">序号</span><span class="t" style="left:60px;top:550px">品种代码</span><span class="t" style="left:120px;top:550px">品种名称</span><span class="t" style="left:212px;top:550px">异动情况</span><span class="t" style="left:276px;top:550px">时间</span><span class="t" style="left:357px;top:550px">数值</span><span class="t" style="left:445px;top:550px">涨幅</span><span class="t" style="left:509px;top:550px">最新价</span><span class="t" style="left:559px;top:550px">成交额</span><span class="t" style="left:623px;top:550px">换手率</span>
<div style="color:#8484c4"><span class="t" style="color:#8484c4;left:24px;top:570px">1</span><span class="t" style="color:#8484c4;left:60px;top:570px">UR12</span><span class="t" style="color:#8484c4;left:120px;top:570px">尿素2112</span><span class="t" style="color:#8484c4;left:212px;top:570px">涨停打开</span><span class="t" style="color:#8484c4;left:276px;top:570px">19 09:50:10</span><span class="t" style="color:#8484c4;left:357px;top:570px">3247</span><span class="t" style="color:#8484c4;left:445px;top:570px">+5.49%</span><span class="t" style="color:#8484c4;left:509px;top:570px">3247</span><span class="t" style="color:#8484c4;left:559px;top:570px">494万</span><span class="t" style="color:#8484c4;left:623px;top:570px">0.00%</span>
<span class="t" style="color:#8484c4;left:24px;top:586px">2</span><span class="t" style="color:#8484c4;left:60px;top:586px">UR12</span><span class="t" style="color:#8484c4;left:120px;top:586px">尿素2112</span><span class="t" style="color:#8484c4;left:212px;top:586px">涨停打开</span><span class="t" style="color:#8484c4;left:276px;top:586px">19 09:52:53</span><span class="t" style="color:#8484c4;left:357px;top:586px">3259</span><span class="t" style="color:#8484c4;left:445px;top:586px">+5.88%</span><span class="t" style="color:#8484c4;left:509px;top:586px">3259</span><span class="t" style="color:#8484c4;left:559px;top:586px">527万</span><span class="t" style="color:#8484c4;left:623px;top:586px">0.00%</span>
<span class="t" style="color:#c00000;left:24px;top:602px">3</span><span class="t" style="color:#c00000;left:60px;top:602px">UR12</span><span class="t" style="color:#c00000;left:120px;top:602px">尿素2112</span><span class="t" style="color:#c00000;left:212px;top:602px">封涨停板</span><span class="t" style="color:#c00000;left:276px;top:602px">19 09:55:43</span><span class="t" style="color:#c00000;left:357px;top:602px">3263</span><span class="t" style="color:#c00000;left:445px;top:602px">+6.01%</span><span class="t" style="color:#c00000;left:509px;top:602px">3263</span><span class="t" style="color:#c00000;left:559px;top:602px">560万</span><span class="t" style="color:#c00000;left:623px;top:602px">0.00%</span></div>
<div class="tab" style="left:10px;width:51px;top:951px;height:20px;background:#fff;padding:3px 0 0 7px;border:none">全部</div><div class="tab" style="left:61px;width:46px">发射</div><div class="tab" style="left:107px;width:48px">跳水</div><div class="tab" style="left:155px;width:48px">巨额</div><div class="tab" style="left:203px;width:48px">放量</div><div class="tab" style="left:251px;width:48px">涨停</div><div class="tab" style="left:299px;width:48px">跌停</div><div class="tab" style="left:347px;width:48px">涨开</div><div class="tab" style="left:395px;width:48px">跌开</div><div class="tab" style="left:443px;width:48px">新高</div><div class="tab" style="left:491px;width:48px">新低</div><div class="tab" style="left:539px;width:48px">大买</div><div class="tab" style="left:587px;width:48px">大卖</div><div class="tab" style="left:635px;width:48px">买量</div><div class="tab" style="left:683px;width:35px;overflow:hidden">卖量</div>
<svg style="position:absolute;left:719px;top:955px" width="32" height="17"><rect x=".5" y=".5" width="15" height="15" fill="#ddd" stroke="#bbb"/><rect x="16.500" y=".5" width="15" height="15" fill="#ddd" stroke="#bbb"/><path d="M10 4l-4 4 4 4z" fill="#36a"/><path d="M22 4l4 4-4 4z" fill="#36a"/></svg>

<!-- dialog -->
<div class="gl" style="left:794px;top:315px;width:602px;height:364px;background:linear-gradient(rgba(225,230,235,.55),rgba(190,195,200,.5));border:1px solid #555;border-radius:6px;box-sizing:border-box"></div>
<div style="position:absolute;left:801px;top:343px;width:589px;height:330px;background:#f0f0f0;border:1px solid #555;box-sizing:border-box;box-shadow:0 0 0 1px #ddd"></div>
<span class="t" style="left:801px;top:321px;color:#000">异动雷达设置</span>
<div style="position:absolute;left:1344px;top:315px;width:46px;height:19px;background:linear-gradient(#d8786c,#b84a3a 45%,#8f1f12 50%,#c85a40);border:1px solid #5a2a2a;border-top:none;border-radius:0 0 4px 4px;box-sizing:border-box"></div>
<svg style="position:absolute;left:1344px;top:315px" width="46" height="19"><path d="M18 5l9 9m0-9l-9 9" stroke="#fff" stroke-width="2.400"/></svg>

<i class="c" style="left:807px;top:349px"></i><span class="t" style="left:822px;top:348px">1.火箭发射(1)</span>
<i class="c" style="left:807px;top:373px"></i><span class="t" style="left:822px;top:372px">2.高台跳水(2)</span>
<i class="c" style="left:807px;top:397px"></i><span class="t" style="left:822px;top:396px">3.巨额成交(3)</span>
<i class="c" style="left:807px;top:420px"></i><span class="t" style="left:822px;top:419px">4.大幅放量(4)</span>
<i class="c k" style="left:807px;top:445px"></i><span class="t" style="left:822px;top:444px">5.封涨停板(5)</span>
<i class="c" style="left:807px;top:467px"></i><span class="t" style="left:822px;top:466px">6.创当日新高(6)</span>
<i class="c" style="left:807px;top:492px"></i><span class="t" style="left:822px;top:491px">7.创当日新低(7)</span>
<i class="o k" style="left:924px;top:349px"></i><span class="t" style="left:939px;top:348px">涨速绝对值&gt;=</span><b class="f" style="left:1026px;top:345px;width:38px;font-weight:normal">4</b><span class="t" style="left:1070px;top:347px">%</span>
<i class="o" style="left:924px;top:373px"></i><span class="t" style="left:939px;top:372px">单笔升跌比率:</span><b class="f d" style="left:1026px;top:369px;width:38px;font-weight:normal">1</b><span class="t" style="left:1070px;top:371px">%</span>
<span class="t" style="left:955px;top:395px">单笔门限值:</span><b class="f" style="left:1025px;top:393px;width:38px;font-weight:normal">1000</b><span class="t" style="left:1067px;top:395px">万元</span>
<span class="t" style="left:907px;top:418px">现手&gt;=</span><b class="f" style="left:948px;top:417px;width:35px;font-weight:normal">500</b><span class="t" style="left:985px;top:418px">且量比&gt;=</span><b class="f" style="left:1038px;top:417px;width:37px;font-weight:normal">5</b><span class="t" style="left:1079px;top:418px">倍</span>
<i class="c k" style="left:915px;top:445px"></i><span class="t" style="left:930px;top:444px">封跌停板</span><i class="c k" style="left:986px;top:445px"></i><span class="t" style="left:1002px;top:444px">涨停打开</span><i class="c k" style="left:1058px;top:445px"></i><span class="t" style="left:1073px;top:444px">跌停打开</span>
<span class="t" style="left:1194px;top:442px">大买卖盘报警须现手&gt;=</span><b class="f" style="left:1324px;top:441px;width:40px;font-weight:normal">50</b><span class="t" style="left:1370px;top:442px">手</span>
<span class="t" style="left:918px;top:465px">现手&gt;=</span><b class="f" style="left:961px;top:465px;width:37px;font-weight:normal">1</b><span class="t" style="left:1001px;top:465px">且量比&gt;=</span><b class="f" style="left:1057px;top:465px;width:29px;font-weight:normal">2</b>
<span class="t" style="left:918px;top:490px">现手&gt;=</span><b class="f" style="left:961px;top:490px;width:37px;font-weight:normal">1</b><span class="t" style="left:1001px;top:490px">且量比&gt;=</span><b class="f" style="left:1057px;top:490px;width:29px;font-weight:normal">2</b>
<i class="c" style="left:1098px;top:349px"></i><span class="t" style="left:1113px;top:348px">8.  大笔主买(8)</span><i class="o" style="left:1212px;top:349px"></i><span class="t" style="left:1228px;top:348px">按手</span><i class="o k" style="left:1263px;top:349px"></i><span class="t" style="left:1279px;top:348px">按额</span><i class="o" style="left:1317px;top:349px"></i><span class="t" style="left:1332px;top:348px">按流通盘</span>
<i class="c" style="left:1098px;top:373px"></i><span class="t" style="left:1113px;top:372px">9.  大笔主卖(9)</span><b class="f d" style="left:1209px;top:369px;width:38px;font-weight:normal">500</b><span class="t" style="left:1251px;top:370px">手</span><b class="f" style="left:1272px;top:369px;width:37px;font-weight:normal">500</b><span class="t" style="left:1312px;top:370px">万</span><b class="f d" style="left:1331px;top:369px;width:32px;font-weight:normal">0.1</b><span class="t" style="left:1367px;top:370px">%</span>
<i class="c" style="left:1098px;top:397px"></i><span class="t" style="left:1113px;top:396px;outline:1px dotted #444">10.有大买盘(A)</span><i class="o" style="left:1212px;top:397px"></i><span class="t" style="left:1228px;top:396px">按手</span><i class="o k" style="left:1263px;top:397px"></i><span class="t" style="left:1279px;top:396px">按额</span><i class="o" style="left:1317px;top:397px"></i><span class="t" style="left:1332px;top:396px">按流通盘</span>
<i class="c" style="left:1098px;top:420px"></i><span class="t" style="left:1113px;top:419px">11.有大卖盘(B)</span><b class="f d" style="left:1209px;top:417px;width:38px;font-weight:normal">1000</b><span class="t" style="left:1253px;top:418px">手</span><b class="f" style="left:1272px;top:417px;width:37px;font-weight:normal">1000</b><span class="t" style="left:1312px;top:418px">万</span><b class="f d" style="left:1331px;top:417px;width:32px;font-weight:normal">0.3</b><span class="t" style="left:1373px;top:418px">%</span>
<i class="c" style="left:1098px;top:467px"></i><span class="t" style="left:1113px;top:466px">12.低开长阳(C)</span><span class="t" style="left:1207px;top:465px">低开</span><b class="f" style="left:1233px;top:465px;width:45px;font-weight:normal">5</b><span class="t" style="left:1281px;top:465px">%且上涨</span><b class="f" style="left:1327px;top:465px;width:36px;font-weight:normal">5</b><span class="t" style="left:1373px;top:465px">%</span>
<i class="c" style="left:1098px;top:492px"></i><span class="t" style="left:1113px;top:491px">13.高开长阴(D)</span><span class="t" style="left:1207px;top:490px">高开</span><b class="f" style="left:1233px;top:490px;width:45px;font-weight:normal">5</b><span class="t" style="left:1281px;top:490px">%且下跌</span><b class="f" style="left:1327px;top:490px;width:36px;font-weight:normal">5</b><span class="t" style="left:1373px;top:490px">%</span>
<span class="t" style="left:807px;top:508px">监控市场分类</span><div style="position:absolute;left:894px;top:515px;width:491px;height:1px;background:#bbb"></div>
<div style="position:absolute;left:807px;top:528px;width:581px;height:81px;background:#fff;border:1px solid #999;box-sizing:border-box"></div>
<i class="c k" style="left:810px;top:530px"></i><span class="t" style="left:827px;top:529px">上海期货</span><i class="c k" style="left:905px;top:530px"></i><span class="t" style="left:922px;top:529px">郑州期货</span><i class="c" style="left:1001px;top:530px"></i><span class="t" style="left:1018px;top:529px">深圳B股</span><i class="c" style="left:1097px;top:530px"></i><span class="t" style="left:1114px;top:529px">深圳创业</span><i class="c" style="left:1194px;top:530px"></i><span class="t" style="left:1210px;top:529px">上海B股</span><i class="c" style="left:1290px;top:530px"></i><span class="t" style="left:1307px;top:529px">上海回购</span>
<i class="c" style="left:810px;top:544px"></i><span class="t" style="left:827px;top:543px">商品指数</span><i class="c k" style="left:905px;top:544px"></i><span class="t" style="left:922px;top:543px">金融期货</span><i class="c" style="left:1001px;top:544px"></i><span class="t" style="left:1018px;top:543px">深圳基金</span><i class="c" style="left:1097px;top:544px"></i><span class="t" style="left:1114px;top:543px">深圳回购</span><i class="c" style="left:1194px;top:544px"></i><span class="t" style="left:1210px;top:543px">上海基金</span><i class="c" style="left:1290px;top:544px"></i><span class="t" style="left:1307px;top:543px">系统指数</span>
<i class="c k" style="left:810px;top:558px"></i><span class="t" style="left:827px;top:557px;font-family:'Liberation Mono'">SHFE-INE</span><i class="c" style="left:905px;top:558px"></i><span class="t" style="left:922px;top:557px">深圳指数</span><i class="c" style="left:1001px;top:558px"></i><span class="t" style="left:1018px;top:557px">深圳债券</span><i class="c" style="left:1097px;top:558px"></i><span class="t" style="left:1114px;top:557px">上海指数</span><i class="c" style="left:1194px;top:558px"></i><span class="t" style="left:1210px;top:557px">上海债券</span><i class="c" style="left:1290px;top:558px"></i><span class="t" style="left:1307px;top:557px">上海科创</span>
<i class="c k" style="left:810px;top:572px"></i><span class="t" style="left:827px;top:571px">大连期货</span><i class="c" style="left:905px;top:572px"></i><span class="t" style="left:922px;top:571px">深圳A股</span><i class="c" style="left:1001px;top:572px"></i><span class="t" style="left:1018px;top:571px">深圳权证</span><i class="c" style="left:1097px;top:572px"></i><span class="t" style="left:1114px;top:571px">上海A股</span><i class="c" style="left:1194px;top:572px"></i><span class="t" style="left:1210px;top:571px">上海权证</span><i class="c" style="left:1290px;top:572px"></i><span class="t" style="left:1307px;top:571px">沪期权T报价</span>
<div style="position:absolute;left:808px;top:592px;width:579px;height:16px;background:#f0f0f0"></div>
<div style="position:absolute;left:827px;top:593px;width:249px;height:14px;background:linear-gradient(#f2f2f2,#e0e0e0 50%,#c8c8c8);border:1px solid #999;border-radius:2px;box-sizing:border-box"></div>
<svg style="position:absolute;left:808px;top:592px" width="580" height="16"><path d="M12 4l-4 4 4 4z"/><path d="M569 4l4 4-4 4z"/><path d="M150 5v6M152 5v6M154 5v6" stroke="#666"/></svg>
<i class="c k" style="left:810px;top:621px"></i><span class="t" style="left:825px;top:620px">开机自启动(O)</span><i class="c k" style="left:924px;top:621px"></i><span class="t" style="left:939px;top:620px">触发弹出报警窗口(R)</span><i class="c k" style="left:1053px;top:621px"></i><span class="t" style="left:1067px;top:620px">发出提示音</span><span class="t" style="left:1136px;top:620px">最大记录保</span>
<b class="f" style="left:1206px;top:617px;width:45px;height:19px;text-align:left;padding-left:2px;font-weight:normal">200</b><span class="t" style="left:1253px;top:620px">条</span>
<div class="btn" style="left:807px;width:123px">名称过滤(V)...</div><div class="btn" style="left:1206px;width:81px">关闭雷达(N)</div><div class="btn" style="left:1303px;width:81px;border:1px solid #2a9ad8;box-shadow:inset 0 0 2px #6cf;background:linear-gradient(#e8f4fa,#c0e0f0)">确定</div>
</body></html>
